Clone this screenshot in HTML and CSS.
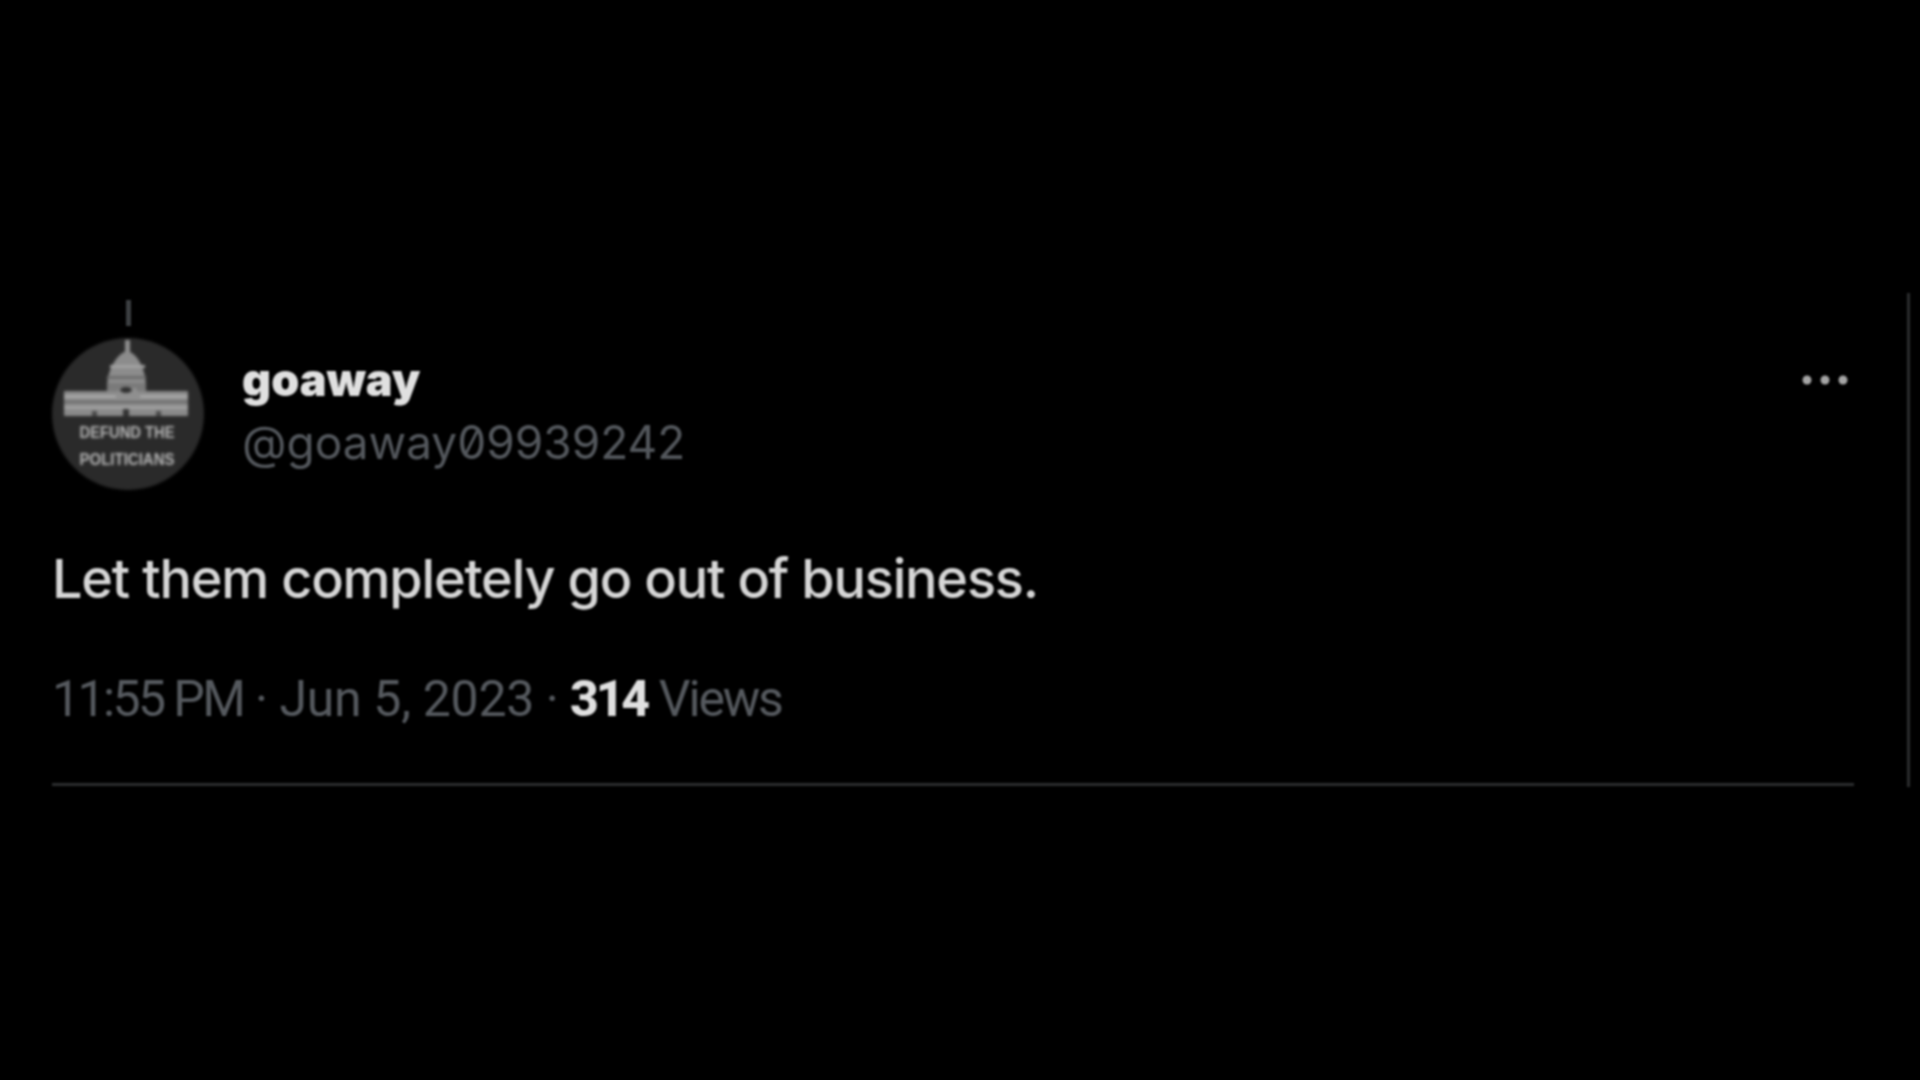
FILE: index.html
```html
<!DOCTYPE html>
<html lang="en">
<head>
    <meta charset="UTF-8">
    <title>goaway tweet</title>
    <link rel="stylesheet" href="styles.css">
</head>
<body>
    <div class="tweet">
        <div class="tweet-head">
            <div class="avatar-col">
                <div class="thread-tick"></div>
                <svg class="avatar" width="152" height="152" viewBox="0 0 152 152">
                    <circle cx="76" cy="76" r="76" fill="#2a2a2a"/>
                    <!-- capitol -->
                    <rect x="73" y="2" width="5" height="12" fill="#8f8f8f"/>
                    <path d="M55 50 C55 30 66 15 75 13 C85 15 94 30 94 50 Z" fill="#8c8c8c"/>
                    <rect x="58" y="27" width="35" height="3" fill="#a2a2a2"/>
                    <rect x="55" y="38" width="39" height="3" fill="#6c6c6c"/>
                    <rect x="55" y="45" width="39" height="9" fill="#7a7a7a"/>
                    <rect x="12" y="53" width="124" height="25" fill="#8a8a8a"/>
                    <rect x="12" y="57" width="124" height="3" fill="#a8a8a8"/>
                    <rect x="12" y="63" width="124" height="2" fill="#686868"/>
                    <rect x="12" y="68" width="124" height="3" fill="#a0a0a0"/>
                    <path d="M62 62 L90 62 L84 50 L68 50 Z" fill="#8f8f8f"/>
                    <ellipse cx="74" cy="52" rx="6" ry="3" fill="#2f2f2f"/>
                    <rect x="71" y="71" width="6" height="7" fill="#333"/>
                    <rect x="40" y="73" width="5" height="5" fill="#4a4a4a"/>
                    <rect x="104" y="73" width="5" height="5" fill="#4a4a4a"/>
                    <text x="75" y="100" class="avatar-text" textLength="95" lengthAdjust="spacingAndGlyphs">DEFUND THE</text>
                    <text x="75" y="127" class="avatar-text" textLength="95" lengthAdjust="spacingAndGlyphs">POLITICIANS</text>
                </svg>
            </div>
            <div class="names">
                <div class="display-name">goaway</div>
                <div class="handle">@goaway09939242</div>
            </div>
            <svg class="more" width="48" height="12" viewBox="0 0 48 12">
                <circle cx="6" cy="6" r="4.5" fill="#a5a5a5"/>
                <circle cx="24" cy="6" r="4.5" fill="#a5a5a5"/>
                <circle cx="42" cy="6" r="4.5" fill="#a5a5a5"/>
            </svg>
        </div>
        <div class="tweet-text">Let them completely go out of business.</div>
        <div class="tweet-meta"><span class="meta-time">11:55 PM</span> · <span class="meta-date">Jun 5, 2023</span> · <strong>314</strong> <span class="meta-views">Views</span></div>
        <div class="divider"></div>
    </div>
</body>
</html>
```

FILE: styles.css
```css
html, body {
    margin: 0;
    height: 100%;
    background-color: #000;
}

body {
    height: 1080px;
    overflow: hidden;
    font-family: Inter, Roboto, sans-serif;
}

.tweet {
    box-sizing: border-box;
    width: 1910px;
    margin-top: 293px;
    padding: 7px 53px 0 52px;
    height: 494px;
    border-right: 3px solid #2b2d2e;
    filter: blur(0.9px);
}

.tweet-head {
    display: flex;
    align-items: flex-start;
}

.avatar-col {
    display: flex;
    flex-direction: column;
    align-items: center;
    width: 152px;
}

.thread-tick {
    width: 5px;
    height: 26px;
    margin-bottom: 12px;
    background-color: #3c3f42;
}

.avatar {
    display: block;
    filter: blur(1px);
}

.avatar-text {
    font-family: "Liberation Sans", sans-serif;
    font-size: 16px;
    font-weight: bold;
    fill: #b8b8b8;
    text-anchor: middle;
}

.names {
    margin-left: 38px;
    padding-top: 55px;
}

.display-name {
    font-size: 45px;
    font-weight: 900;
    line-height: 50px;
    color: #e0e0e0;
}

.handle {
    margin-top: 12px;
    font-size: 46px;
    line-height: 50px;
    color: #53575c;
    font-feature-settings: "zero";
}

.more {
    margin-left: auto;
    margin-top: 74px;
    margin-right: 5px;
}

.tweet-text {
    margin-top: 58px;
    font-size: 54px;
    font-weight: 500;
    letter-spacing: -1.2px;
    line-height: 62px;
    color: #d6d6d6;
}

.tweet-meta {
    margin-top: 62px;
    font-family: Roboto, sans-serif;
    font-size: 50px;
    line-height: 54px;
    letter-spacing: -0.6px;
    color: #55595e;
}

.meta-time {
    letter-spacing: -2.6px;
}

.meta-date {
    letter-spacing: -0.3px;
}

.meta-views {
    letter-spacing: -2.2px;
}

.tweet-meta strong {
    font-weight: 800;
    letter-spacing: -3.2px;
    color: #e0e0e0;
}

.divider {
    height: 3px;
    margin-top: 57px;
    background-color: #2b2d2e;
}
```
